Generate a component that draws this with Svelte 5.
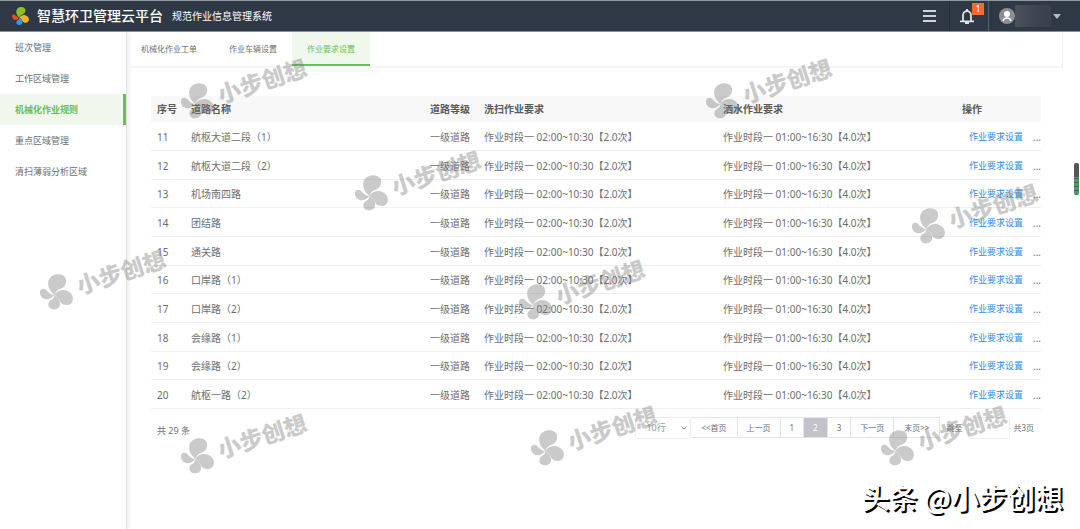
<script>
  const menu = ["班次管理", "工作区域管理", "机械化作业规则", "重点区域管理", "清扫薄弱分析区域"];
  const tabs = ["机械化作业工单", "作业车辆设置", "作业要求设置"];
  const roads = [
    "航枢大道二段（1）",
    "航枢大道二段（2）",
    "机场南四路",
    "团结路",
    "通关路",
    "口岸路（1）",
    "口岸路（2）",
    "会缘路（1）",
    "会缘路（2）",
    "航枢一路（2）"
  ];
  const rows = roads.map((name, i) => ({ id: 11 + i, name }));
  const pages = ["<<首页", "上一页", "1", "2", "3", "下一页", "末页>>"];
  const marks = [
    [197, 101],
    [722, 101],
    [371, 193],
    [928, 226],
    [56, 292],
    [535, 302],
    [197, 456],
    [547, 448],
    [897, 448]
  ];
  // four fan blades: top, right, bottom, left
  const blades = [
    ["#8cc220", "M43 62C30 52 18 32 28 14C38 -3 66 -4 76 10C83 24 76 38 62 44C51 48 46 54 43 62z"],
    ["#f5b32a", "M43 62C51 49 70 44 84 51C100 58 102 76 95 86C86 97 67 94 60 82C56 73 52 66 43 62z"],
    ["#2d9be8", "M43 62C56 70 65 86 58 98C51 108 33 109 27 98C22 88 27 80 36 76C41 73 43 68 43 62z"],
    ["#ee4b23", "M43 62C34 77 16 79 6 70C-3 60 -2 46 8 44C17 43 20 50 26 55C31 60 36 62 43 62z"]
  ];

  let activeMenu = $state(2);
  let activeTab = $state(2);
  let page = $state("2");
</script>

<div class="app">
  <header class="topbar">
    <svg class="logo" viewBox="0 0 99 106" aria-hidden="true">
      {#each blades as [color, d]}
        <path fill={color} {d} />
      {/each}
    </svg>
    <h1>智慧环卫管理云平台</h1>
    <span class="subtitle">规范作业信息管理系统</span>
    <div class="tools">
      <button class="burger" aria-label="菜单"><i></i><i></i><i></i></button>
      <button class="bell" aria-label="消息">
        <svg width="14" height="15" viewBox="0 0 14 15" fill="none" stroke="#dfe2e6" stroke-width="1.8">
          <path d="M3 12V6.5a4 4.5 0 0 1 8 0V12M0 12.3h14" />
          <path d="M7 0v2M5 14h4" />
        </svg>
        <span class="badge">1</span>
      </button>
      <button class="user" aria-label="用户">
        <svg width="16" height="16" viewBox="0 0 16 16">
          <circle cx="8" cy="8" r="8" fill="#8c9095" />
          <circle cx="8" cy="6" r="3" fill="#fff" />
          <path d="M4 13c1-4 7-4 8 0" fill="none" stroke="#fff" stroke-width="1.6" />
        </svg>
        <span class="name"></span>
        <span class="caret"></span>
      </button>
    </div>
  </header>

  <div class="body">
    <nav class="sidebar">
      {#each menu as item, i}
        <button class:active={i === activeMenu} onclick={() => (activeMenu = i)}>{item}</button>
      {/each}
    </nav>

    <main>
      <div class="tabs">
        {#each tabs as tab, i}
          <button class:active={i === activeTab} onclick={() => (activeTab = i)}>{tab}</button>
        {/each}
      </div>

      <section class="content">
        <table>
          <colgroup>
            <col class="c-id" /><col class="c-name" /><col class="c-level" />
            <col class="c-wash" /><col class="c-water" /><col class="c-op" />
          </colgroup>
          <thead>
            <tr>
              <th>序号</th>
              <th>道路名称</th>
              <th>道路等级</th>
              <th>洗扫作业要求</th>
              <th>洒水作业要求</th>
              <th>操作</th>
            </tr>
          </thead>
          <tbody>
            {#each rows as row}
              <tr>
                <td>{row.id}</td>
                <td>{row.name}</td>
                <td>一级道路</td>
                <td>作业时段一 02:00~10:30【2.0次】</td>
                <td>作业时段一 01:00~16:30【4.0次】</td>
                <td><div class="ops"><a href="#set">作业要求设置</a><span>...</span></div></td>
              </tr>
            {/each}
          </tbody>
        </table>

        <footer class="pager">
          <span class="total">共 29 条</span>
          <div class="size">
            <select aria-label="每页行数"><option>10行</option></select>
            <svg width="6" height="4" viewBox="0 0 6 4" aria-hidden="true">
              <path d="M0.5 0.5L3 3L5.5 0.5" fill="none" stroke="#888" />
            </svg>
          </div>
          <div class="pages">
            {#each pages as p}
              <button class:active={p === page} onclick={() => (page = p)}>{p}</button>
            {/each}
          </div>
          <label for="jump">跳至</label>
          <input id="jump" type="text" />
          <span class="count">共3页</span>
        </footer>
      </section>
    </main>
  </div>

  <div class="handle"></div>

  {#each marks as [x, y]}
    <div class="mark" style="left: {x}px; top: {y}px">
      <svg viewBox="0 0 99 106" aria-hidden="true">
        {#each blades as [, d]}
          <path {d} />
        {/each}
      </svg>
      <span>小步创想</span>
    </div>
  {/each}

  <div class="credit">头条 @小步创想</div>
</div>

<style>
  :global(body) {
    margin: 0;
    background: #fff;
  }
  .app {
    position: relative;
    display: flex;
    flex-direction: column;
    min-height: 100vh;
    overflow: hidden;
    box-sizing: border-box;
    font-family: "Noto Sans", "Noto Sans CJK SC", sans-serif;
    font-size: 10px;
    color: #6e6e6e;
  }
  button,
  select,
  input {
    box-sizing: border-box;
    margin: 0;
    padding: 0;
    border: 0;
    background: none;
    font: inherit;
    color: inherit;
  }

  .topbar {
    position: relative;
    z-index: 1;
    display: flex;
    align-items: center;
    box-sizing: border-box;
    height: 32px;
    padding-left: 12px;
    background: #2f3845;
    border-top: 1px solid #8f999f;
    border-bottom: 1px solid #868d95;
    color: #fff;
  }
  .logo {
    width: 17px;
    height: 18px;
  }
  h1 {
    margin: 0 9px 0 8px;
    font-size: 14px;
    font-weight: 500;
    line-height: 20px;
  }
  .subtitle {
    line-height: 20px;
  }
  .tools {
    display: flex;
    height: 100%;
    margin-left: auto;
  }
  .burger {
    display: flex;
    flex-direction: column;
    justify-content: center;
    gap: 3px;
    width: 26px;
  }
  .burger i {
    width: 13px;
    height: 2px;
    background: #cfd2d7;
  }
  .bell {
    position: relative;
    width: 40px;
    border-left: 1px solid #222a34;
    border-right: 1px solid #59616c;
  }
  .bell svg {
    display: block;
    margin-left: 10px;
  }
  .badge {
    position: absolute;
    top: 2px;
    right: 4px;
    width: 12px;
    font-size: 9px;
    line-height: 12px;
    background: #f66a34;
  }
  .user {
    display: flex;
    align-items: center;
    width: 91px;
    padding-left: 10px;
  }
  .name {
    width: 36px;
    height: 22px;
    background: linear-gradient(90deg, #4a525c, #3c444f 60%, #39414d);
  }
  .caret {
    margin-left: 2px;
    border: 4px solid transparent;
    border-top: 5px solid #b5b9be;
    border-bottom: 0;
  }

  .body {
    display: flex;
    flex: 1;
  }
  .sidebar {
    flex: none;
    box-sizing: border-box;
    width: 127px;
    border-right: 1px solid #dfe2e5;
    box-shadow: 2px 0 4px #eee;
  }
  .sidebar button {
    display: block;
    width: 100%;
    height: 31px;
    padding-left: 15px;
    text-align: left;
    font-size: 9px;
  }
  .sidebar .active {
    background: #f0f7ed;
    border-right: 3px solid #6abf55;
    color: #6abf55;
    font-weight: bold;
  }

  main {
    flex: 1;
    min-width: 0;
  }
  .tabs {
    display: flex;
    box-sizing: border-box;
    height: 36px;
    margin-right: 17px;
    border-right: 1px solid #eee;
    border-bottom: 2px solid #f5f5f5;
  }
  .tabs button {
    height: 34px;
    padding: 0 15px;
    font-size: 8px;
    border-bottom: 2px solid transparent;
  }
  .tabs button:first-child {
    padding: 0 17px 0 14px;
  }
  .tabs .active {
    background: #f0f7ed;
    border-color: #6abf55;
    color: #6abf55;
  }

  .content {
    padding: 28px 39px 0 24px;
  }
  table {
    width: 100%;
    table-layout: fixed;
    border-collapse: separate;
    border-spacing: 0;
  }
  .c-id {
    width: 34px;
  }
  .c-name {
    width: 239px;
  }
  .c-level {
    width: 54px;
  }
  .c-wash,
  .c-water {
    width: 239px;
  }
  th,
  td {
    box-sizing: border-box;
    padding: 0 0 0 6px;
    text-align: left;
    line-height: 14px;
    white-space: nowrap;
  }
  th {
    height: 26px;
    background: #f8f8f8;
    color: #5a5a5a;
  }
  td {
    height: 29px;
    padding-top: 1px;
    border-bottom: 1px solid #edf0f0;
  }
  tr:nth-child(3n) td {
    height: 28px;
  }
  .ops {
    display: flex;
    justify-content: space-between;
    padding-left: 7px;
  }
  .ops a {
    font-size: 9px;
    color: #2d8cf0;
    text-decoration: none;
  }

  .pager {
    display: flex;
    align-items: center;
    height: 21px;
    padding: 8px 7px 0 6px;
    font-size: 8px;
  }
  .total {
    margin-right: auto;
    padding-top: 5px;
    font-size: 9px;
  }
  .size {
    display: flex;
    align-items: center;
  }
  .size svg {
    margin-left: -10px;
    margin-right: 4px;
    pointer-events: none;
  }
  .pager select {
    width: 56px;
    height: 22px;
    padding-left: 10px;
    border: 1px solid #eee;
    border-radius: 3px;
    font-size: 9px;
    color: #999;
    appearance: none;
  }
  .pages {
    display: flex;
  }
  .pages button {
    height: 21px;
    padding: 0 9px;
    border: 1px solid #e4e4e8;
    border-left: 0;
  }
  .pages button:first-child,
  .pages button:last-child {
    padding: 0 10px;
  }
  .pages .active {
    background: #c3c1cc;
    color: #fff;
  }
  .pager label {
    margin: 0 6px;
  }
  .pager input {
    width: 42px;
    height: 22px;
    margin-right: 3px;
    border: 1px solid #eee;
    border-radius: 3px;
  }

  .handle {
    position: absolute;
    top: 163px;
    right: 1px;
    width: 5px;
    height: 32px;
    border-radius: 2px;
    background: linear-gradient(#555 14px, transparent 14px), repeating-linear-gradient(#2fae5b 0 3px, #555 3px 4px);
  }

  .mark {
    position: absolute;
    display: flex;
    align-items: center;
    gap: 5px;
    height: 36px;
    margin: -18px 0 0 -16px;
    transform: rotate(-18deg);
    transform-origin: 16px 18px;
    font-family: "Noto Sans CJK SC", sans-serif;
    font-size: 23px;
    font-weight: 900;
    line-height: 36px;
    white-space: nowrap;
    color: #777;
    opacity: 0.38;
    pointer-events: none;
  }
  .mark svg {
    width: 33px;
    height: 36px;
    fill: currentColor;
    transform: rotate(18deg);
  }

  .credit {
    position: absolute;
    right: 17px;
    bottom: 12px;
    font-family: "Noto Sans CJK SC", sans-serif;
    font-size: 28px;
    font-weight: 500;
    line-height: 40px;
    color: #fff;
    text-shadow: 2px 2px 0 #000;
  }
</style>
